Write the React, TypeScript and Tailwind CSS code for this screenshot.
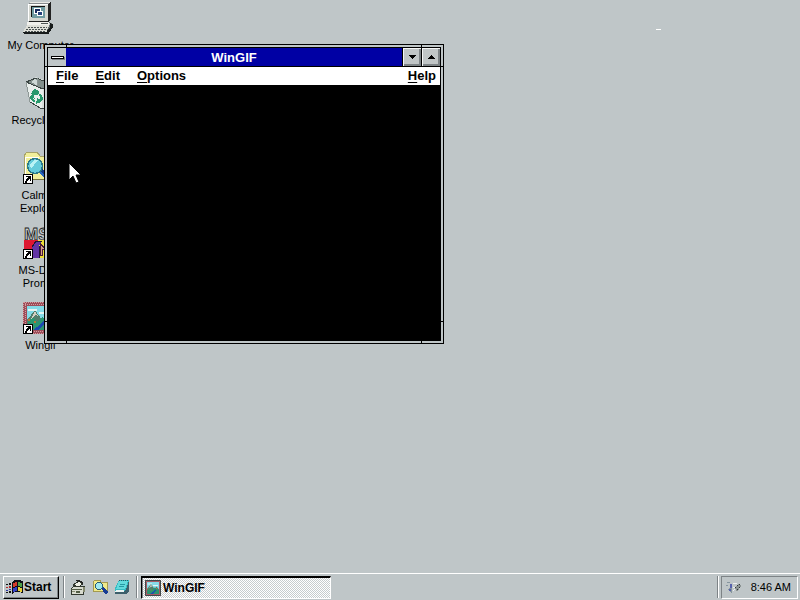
import React from "react";

const sans = "font-['Liberation_Sans',Arial,sans-serif]";

function ShortcutArrow() {
  return (
    <g>
      <rect x="0.5" y="22.5" width="9" height="9" fill="#fff" stroke="#000" />
      <path d="M3 24h5v5h-1v-2h-1v1h-1v1h-1v2h-2v-2h1v-2h1v-1h1v-1h-2z" fill="#000" />
    </g>
  );
}

function ComputerIcon() {
  return (
    <svg width="32" height="32" viewBox="0 0 32 32" shapeRendering="crispEdges" aria-hidden="true">
      <path d="M5 2l2-2h20v16l-2 3H5z" fill="#84888a" />
      <rect x="5" y="2" width="20" height="17" fill="#d4d6d0" />
      <path d="M5 2h20v1H6v16H5z" fill="#fff" />
      <path d="M27 0h1v17l-3 3H6v-1h19V2z" fill="#222" />
      <path d="M6 1l1-1h20v1z" fill="#e8e8e4" />
      <rect x="8" y="4" width="14" height="11" fill="#111" />
      <rect x="9" y="5" width="13" height="11" fill="#6f9aa0" />
      <path d="M11 6h7v6h-7z" fill="#fff" />
      <path d="M12 7h5v4h-5z" fill="#182c60" />
      <path d="M14 9h6v5h-6z" fill="#fff" />
      <path d="M15 10h4v3h-4z" fill="#26427c" />
      <path d="M4 20h22v3H4z" fill="#f0f0ec" />
      <path d="M18 21h7v1h-7z" fill="#4e5554" />
      <path d="M4 23h24l-4 7H0z" fill="#dedfd8" />
      <path d="M26 20l4 2-4 8h-2v-2l3-6z" fill="#62696a" />
      <path d="M0 30h24v-1l3-4v-4h1v1h2v3l-4 6v1H1z" fill="#171b1b" />
      <path d="M5 25h19M3 27h20M2 29h20" stroke="#4b5252" strokeDasharray="2 1" />
    </svg>
  );
}

function RecycleIcon() {
  return (
    <svg width="32" height="32" viewBox="0 0 32 32" shapeRendering="crispEdges" aria-hidden="true">
      <path d="M3 5l10-5 17 6-4 22-7 4L7 25z" fill="#d8dedc" />
      <path d="M3 5l10-4 16 6-9 5z" fill="#83908d" />
      <path d="M8 5l5-4 2 8z" fill="#cfd9d7" />
      <path d="M3 5l17 7-1 20L7 25z" fill="#e9eeec" />
      <path d="M3 5l10-4 16 6-9 5z" fill="none" stroke="#3b4543" />
      <path d="M3 5l4 20M14 1v8" fill="none" stroke="#8d9795" />
      <path d="M7 25l12 7 7-4 4-21" fill="none" stroke="#3b4543" />
      <g fill="none" stroke="#27986c" strokeWidth="2.4">
        <path d="M9 17l3-4 4 3M17 17l2 5-4 2M12 25l-4-4 1-3" />
      </g>
      <path d="M15 12v6h-5zM18 25l-5 2 1-6zM6 20l4-3 2 5z" fill="#27986c" />
    </svg>
  );
}

function ExplorerIcon() {
  return (
    <svg width="32" height="32" viewBox="0 0 32 32" shapeRendering="crispEdges" aria-hidden="true">
      <path d="M1 4l3-4h10l3 4h13v23H1z" fill="#f1ef9b" />
      <path d="M1 27V4l3-4h10l3 4h13" fill="none" stroke="#a8a36a" />
      <path d="M2 26V5h14" fill="none" stroke="#fff" />
      <path d="M30 4v24H1v-1h28V4z" fill="#77733e" />
      <path d="M15 20l4-3 12 11-3 4z" fill="#123684" />
      <path d="M17 20l11 10" stroke="#2866bf" strokeWidth="2" />
      <circle cx="12" cy="14" r="7.5" fill="#65ccdb" stroke="#2d7888" strokeWidth="1.5" />
      <path d="M7 13l4-5h4l-7 9z" fill="#b9f3f5" />
      <ShortcutArrow />
    </svg>
  );
}

function DosIcon() {
  return (
    <svg className="overflow-visible" width="32" height="32" viewBox="0 0 32 32" shapeRendering="crispEdges" aria-hidden="true">
      <text x="1" y="13" fontSize="17" fontFamily="Liberation Sans" fontWeight="700" fill="#c4cccc" stroke="#1b2020" strokeWidth="0.8">
        MS
      </text>
      <path d="M1 13h14v18H1z" fill="#dd1730" />
      <path d="M15 13h8v18h-8z" fill="#eddf39" />
      <path d="M9 31V20l4-6h6l-3 5v12z" fill="#6134a5" />
      <path d="M9 20l4-6h6M16 19v12" fill="none" stroke="#201635" />
      <path d="M17 16l5 6-3 1v5h-2z" fill="#d5a18c" stroke="#4d1b3b" />
      <ShortcutArrow />
    </svg>
  );
}

function PictureArt() {
  return (
    <>
      <rect width="32" height="32" fill="#9c4d59" />
      <path d="M1 .5h31M0 2.5h32M1 29.5h31M0 31.5h32M.5 0v32M2.5 1v31M29.5 0v32M31.5 1v31" stroke="#d69a9e" strokeDasharray="1 1" />
      <rect x="4" y="4" width="24" height="24" fill="#85dbe8" />
      <path d="M5 7h9v2H5zM16 10h10v2H16z" fill="#e6f5f3" />
      <path d="M4 18l8-10 7 10 4-5 5 6v9H4z" fill="#537d6c" />
      <path d="M12 9l3 5-3-1-4 4z" fill="#d6d0c5" />
      <path d="M5 19l5-3 4 4 5-5 9 5v8H4z" fill="#2b9571" />
      <path d="M20 19l3 1-7 8h-6l8-6z" fill="#1b4bb2" />
      <path d="M5 17h2v2H5zM11 19h2v2h-2zM22 16h2v2h-2z" fill="#b5743b" />
    </>
  );
}

function WingifIcon() {
  return (
    <svg width="32" height="32" viewBox="0 0 32 32" shapeRendering="crispEdges" aria-hidden="true">
      <PictureArt />
      <ShortcutArrow />
    </svg>
  );
}

const shortcuts = [
  { name: "My Computer", icon: <ComputerIcon /> },
  { name: "Recycle Bin", icon: <RecycleIcon /> },
  { name: "Calmira Explorer", icon: <ExplorerIcon /> },
  { name: "MS-DOS Prompt", icon: <DosIcon /> },
  { name: "Wingif", icon: <WingifIcon /> },
];

function MenuItem({ label, className = "px-2" }: { label: string; className?: string }) {
  return (
    <button type="button" className={`h-full ${className}`}>
      <span className="underline underline-offset-2">{label[0]}</span>
      {label.slice(1)}
    </button>
  );
}

function FrameNotches() {
  return (
    <>
      <i className="absolute top-0 left-[21px] h-[2px] w-px bg-black" />
      <i className="absolute top-0 right-[21px] h-[2px] w-px bg-black" />
      <i className="absolute bottom-0 left-[21px] h-[2px] w-px bg-black" />
      <i className="absolute right-[21px] bottom-0 h-[2px] w-px bg-black" />
      <i className="absolute top-[21px] left-0 h-px w-[2px] bg-black" />
      <i className="absolute top-[21px] right-0 h-px w-[2px] bg-black" />
      <i className="absolute bottom-[21px] left-0 h-px w-[2px] bg-black" />
      <i className="absolute right-0 bottom-[21px] h-px w-[2px] bg-black" />
    </>
  );
}

const sizeButton =
  "flex w-[19px] items-center justify-center border-l border-black bg-[#c0c5c6] shadow-[inset_1px_1px_#f5f6f6,inset_-1px_-1px_#7d8386,inset_-2px_-2px_#7d8386]";

function WinGifWindow() {
  return (
    <section
      aria-label="WinGIF"
      className="absolute top-11 left-11 flex h-[300px] w-[400px] border border-black bg-[#bfc6c8] p-[2px] text-[13px] font-bold"
    >
      <FrameNotches />
      <div className="flex min-w-0 flex-1 flex-col border border-black">
        <header className="flex h-[19px] shrink-0 border-b border-black bg-[#0000a4] text-white">
          <button type="button" aria-label="Control menu" className="flex w-[18px] items-center justify-center bg-[#bfc6c8]">
            <span className="h-[3px] w-[13px] border border-black bg-white shadow-[1px_1px_#7d8386]" />
          </button>
          <h1 className="flex-1 text-center leading-[19px]">WinGIF</h1>
          <button type="button" aria-label="Minimize" className={sizeButton}>
            <svg width="7" height="4" viewBox="0 0 7 4" shapeRendering="crispEdges"><path d="M0 0h7v1H6v1H5v1H4v1H3V3H2V2H1V1H0z" /></svg>
          </button>
          <button type="button" aria-label="Maximize" className={sizeButton}>
            <svg width="7" height="4" viewBox="0 0 7 4" shapeRendering="crispEdges"><path d="M3 0h1v1h1v1h1v1h1v1H0V3h1V2h1V1h1z" /></svg>
          </button>
        </header>
        <nav className="flex h-[18px] shrink-0 gap-px bg-white leading-[18px] text-black">
          <MenuItem label="File" />
          <MenuItem label="Edit" />
          <MenuItem label="Options" />
          <MenuItem label="Help" className="ml-auto pr-1 pl-2" />
        </nav>
        <main className="flex-1 bg-black" />
      </div>
    </section>
  );
}

function FlagIcon() {
  return (
    <svg width="17" height="15" viewBox="0 0 17 15" shapeRendering="crispEdges" aria-hidden="true">
      <path d="M6 2l3-2h4l4 1v12l-4-1H9l-3 2z" fill="#101018" />
      <path d="M7 3l4-1v4l-4 1z" fill="#d43b2c" />
      <path d="M12 2l4 1v4l-4-1z" fill="#4c9f49" />
      <path d="M7 8l4-1v4l-4 1z" fill="#3340c8" />
      <path d="M12 7l4 1v4l-4-1z" fill="#e7cf3b" />
      <path d="M3 3h2v2H3zM3 11h2v2H3zM0 4h2v1H0zM0 12h2v1H0z" fill="#111" />
      <path d="M3 6h2v2H3zM0 7h2v1H0z" fill="#b52c2c" />
      <path d="M3 9h2v1H3zM0 10h2v1H0z" fill="#2b37a6" />
    </svg>
  );
}

function DesktopGlyph() {
  return (
    <svg width="16" height="16" viewBox="0 0 16 16" shapeRendering="crispEdges" aria-hidden="true">
      <path d="M1 10l3-3h11l-2 3v5H1z" fill="#d8dbcf" stroke="#31372e" />
      <path d="M3 6l6-4 4 3-5 3z" fill="#eff0e5" stroke="#31372e" />
      <path d="M6 1h4v1h2v1h1v2h-1V4h-1V3H9V2H6z" fill="#222" />
      <path d="M1 10h11v1H1zM6 12h4v2H6z" fill="#525c44" />
      <path d="M2 12h3v1H2zM13 8h2v5h-2z" fill="#868b71" />
    </svg>
  );
}

function FindGlyph() {
  return (
    <svg width="16" height="16" viewBox="0 0 16 16" shapeRendering="crispEdges" aria-hidden="true">
      <path d="M1 3l2-2h5l1 2h6v9H1z" fill="#f0e989" stroke="#a39a50" />
      <path d="M9 9l2-1 5 5-2 3z" fill="#173c94" />
      <circle cx="7" cy="7" r="3.5" fill="#a0eaf0" stroke="#285d76" />
    </svg>
  );
}

function NotepadGlyph() {
  return (
    <svg width="16" height="16" viewBox="0 0 16 16" shapeRendering="crispEdges" aria-hidden="true">
      <path d="M5 1h10l-2 11-2 3H1V9z" fill="#35bdc4" />
      <path d="M5 2h9l-3 8H2z" fill="#63dadd" />
      <path d="M15 2v10l-3 3H1v-2h9l2-3z" fill="#3c5e6a" />
      <path d="M2 11h8v2H1z" fill="#e9f4f2" />
      <path d="M5 1h10" stroke="#285d65" strokeDasharray="1 1" />
      <path d="M6 5h5M5 7h5" stroke="#2699a3" />
    </svg>
  );
}

function TrayGlyph() {
  return (
    <svg width="17" height="14" viewBox="0 0 17 14" shapeRendering="crispEdges" aria-hidden="true">
      <path d="M2 2h3v1H2zM1 5h2v1H1zM3 10l4-5v8z" fill="#85959e" />
      <path d="M5 4h2v4H5zM4 9h2v2H4z" fill="#5662ad" />
      <path d="M8 3l4 1M8 11l3-3M8 7h3" stroke="#eef0f0" />
      <path d="M10 8l4-5 2 3-4 6z" fill="#8b9392" />
      <path d="M10 7h1v1h-1zM12 5h1v1h-1zM14 4h1v1h-1zM12 9h1v1h-1zM14 7h1v1h-1z" fill="#30383a" />
    </svg>
  );
}

function Groove() {
  return <span className="block h-[22px] w-[2px] border-r border-l border-r-white border-l-[#7d8386]" />;
}

function Taskbar() {
  return (
    <footer className="flex h-[27px] shrink-0 items-center border-t border-white bg-[#bfc6c8] pr-[2px] pl-[3px]">
      <button
        type="button"
        className="flex h-[23px] w-14 items-center gap-px border border-t-white border-r-black border-b-black border-l-white pl-[2px] text-[12px] font-bold shadow-[inset_-1px_-1px_#7d8386]"
      >
        <FlagIcon />
        Start
      </button>
      <span className="ml-1"><Groove /></span>
      <nav aria-label="Quick launch" className="ml-[5px] flex gap-[6px]">
        <button type="button" aria-label="Show desktop"><DesktopGlyph /></button>
        <button type="button" aria-label="Find"><FindGlyph /></button>
        <button type="button" aria-label="Notepad"><NotepadGlyph /></button>
      </nav>
      <span className="mr-[3px] ml-[6px]"><Groove /></span>
      <button
        type="button"
        aria-pressed="true"
        className="flex h-[23px] w-[190px] items-center gap-[2px] border border-t-2 border-t-black border-r-white border-b-white border-l-black bg-[conic-gradient(#ffffff_25%,#c6cccd_0_50%,#ffffff_0_75%,#c6cccd_0)] bg-size-[2px_2px] pl-[3px] text-[12px] font-bold shadow-[inset_1px_0_#7d8386]"
      >
        <svg width="16" height="16" viewBox="0 0 32 32" aria-hidden="true">
          <PictureArt />
          <path d="M1 1h30v30H1z" fill="none" stroke="#3f4a4a" strokeWidth="2" />
        </svg>
        WinGIF
      </button>
      <span className="mr-[2px] ml-auto"><Groove /></span>
      <div className="flex h-[23px] w-[77px] items-center justify-between border border-t-[#7d8386] border-r-white border-b-white border-l-[#7d8386] pr-[6px] pl-[3px] text-[11px]">
        <TrayGlyph />
        <time>8:46 AM</time>
      </div>
    </footer>
  );
}

export default function App() {
  return (
    <div className={`relative flex h-screen flex-col overflow-hidden bg-[#bfc6c8] text-black ${sans}`}>
      <ul className="min-h-0 flex-1 pt-[2px] pl-px">
        {shortcuts.map((item) => (
          <li key={item.name} className="h-[75px] w-[75px]">
            <button type="button" className="flex w-full flex-col items-center gap-[5px] text-[11px] leading-[13px]">
              {item.icon}
              <span className={item.name.length > 12 ? "w-15 pl-1" : "pl-1 whitespace-nowrap"}>{item.name}</span>
            </button>
          </li>
        ))}
      </ul>
      <Taskbar />
      <WinGifWindow />
      <i className="absolute top-[29px] left-[656px] h-px w-[5px] bg-white" />
      <svg className="absolute top-[162px] left-[68px]" width="13" height="22" viewBox="0 0 13 22" aria-hidden="true">
        <path d="M1 1v17l4-4 3 7 3-1-3-7h5z" fill="#fff" stroke="#000" strokeWidth="1" />
      </svg>
    </div>
  );
}
